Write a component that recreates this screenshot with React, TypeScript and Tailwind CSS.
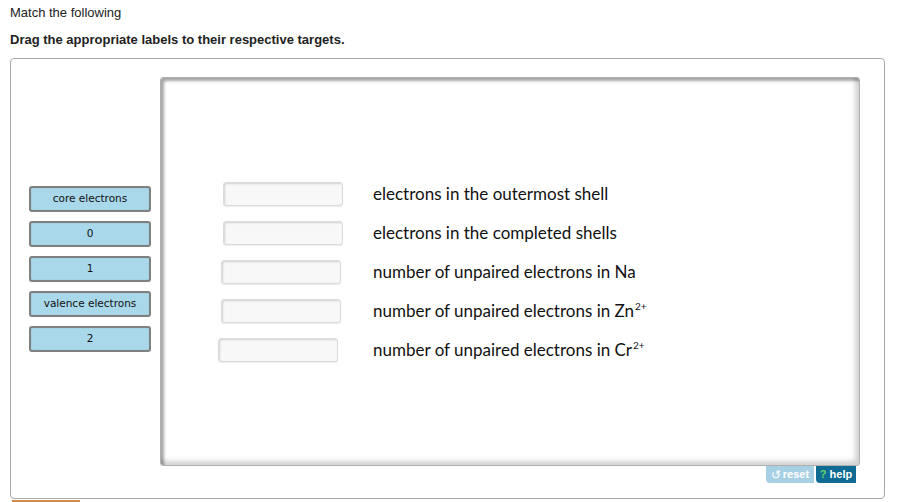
const labels = ['core electrons', '0', '1', 'valence electrons', '2'];

const sup = <span className="relative -top-[7px] ml-[1px] text-[10px] leading-none">2+</span>;

const targets: { offset: string; text: React.ReactNode }[] = [
  { offset: 'ml-[62px]', text: 'electrons in the outermost shell' },
  { offset: 'ml-[62px]', text: 'electrons in the completed shells' },
  { offset: 'ml-[60px]', text: 'number of unpaired electrons in Na' },
  { offset: 'ml-[60px]', text: <>number of unpaired electrons in Zn{sup}</> },
  { offset: 'ml-[57px]', text: <>number of unpaired electrons in Cr{sup}</> },
];

const Label = ({ text }: { text: string }) => (
  <div className="flex h-[26px] w-[122px] items-center justify-center rounded-[3px] border-2 border-[#808080] bg-[#a8d8ea] text-[10.5px] text-[#111] shadow-[inset_0_0_1px_rgba(0,0,0,0.3)] [font-family:'DejaVu_Sans',Verdana,sans-serif]">
    {text}
  </div>
);

export default function App() {
  return (
    <div className="h-[502px] w-[912px] overflow-hidden bg-white px-[10px] [font-family:'Liberation_Sans',Arial,sans-serif]">
      <div className="pt-[5px] text-[13px] leading-[15px] text-[#222]">Match the following</div>
      <div className="mt-[12px] text-[13px] font-bold leading-[15px] text-[#222]">
        Drag the appropriate labels to their respective targets.
      </div>

      <div className="mt-[11px] flex h-[441px] w-[875px] rounded-[4px] border border-[#a9a9a9] pl-[18px] pt-[18px]">
        <div className="flex flex-col gap-[9px] pt-[109px]">
          {labels.map((l) => (
            <Label key={l} text={l} />
          ))}
        </div>

        <div className="ml-[9px] flex flex-col">
          <div className="h-[389px] w-[700px] rounded-[3px] border border-[#b0b0b0] bg-white pt-[96px] shadow-[inset_3px_3px_3px_rgba(0,0,0,0.35),inset_-4px_-4px_5px_rgba(0,0,0,0.18)]">
            {targets.map((t, i) => (
              <div key={i} className="flex h-[39px] items-center">
                <div className="w-[212px] shrink-0">
                  <div
                    className={`${t.offset} h-[24px] w-[120px] rounded-[3px] border border-[#dcdcdc] bg-[#f8f8f8] shadow-[inset_1px_1px_2px_rgba(0,0,0,0.15),0_1px_1px_rgba(0,0,0,0.08)]`}
                  />
                </div>
                <div className="text-[17px] leading-[20px] text-[#111] [font-family:Lato,Carlito,Calibri,sans-serif]">
                  {t.text}
                </div>
              </div>
            ))}
          </div>
          <div className="mr-[4px] flex justify-end gap-[2px]">
            <div className="flex h-[17px] w-[48px] items-center justify-center gap-[2px] rounded-bl-[4px] bg-[#a7d0e5] text-[11px] font-bold text-white">
              <span className="text-[12px] font-normal">↺</span>reset
            </div>
            <div className="flex h-[17px] w-[40px] items-center justify-center gap-[3px] rounded-bl-[4px] bg-[#0f6b93] text-[11px] font-bold text-white">
              <span className="text-[#5fd76b]">?</span>help
            </div>
          </div>
        </div>
      </div>
      <div className="ml-[2px] mt-[1px] h-[2px] w-[68px] bg-[#d08a4a]" />
    </div>
  );
}
